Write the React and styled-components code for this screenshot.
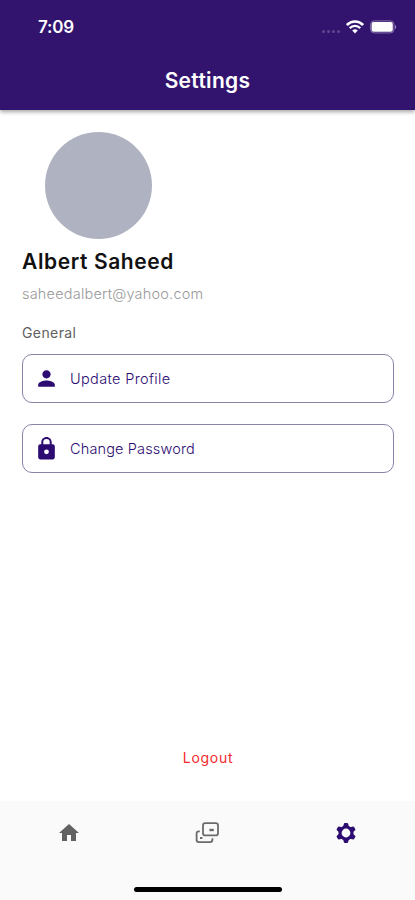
import styled, { createGlobalStyle } from "styled-components";
import { MdPerson, MdHome } from "react-icons/md";

const menuItems = [
  { label: "Update Profile", Icon: MdPerson, spacing: "0.35px" },
  { label: "Change Password", Icon: LockIcon, spacing: "0.15px" },
];

function LockIcon({ size }) {
  return (
    <svg width={size} height={size} viewBox="0 0 24 24" fill="currentColor" fillRule="evenodd">
      <path d="M18 8h-1V6c0-2.76-2.24-5-5-5S7 3.24 7 6v2H6a2 2 0 0 0-2 2v10.5a2 2 0 0 0 2 2h12a2 2 0 0 0 2-2V10a2 2 0 0 0-2-2ZM12 17.5a2.3 2.3 0 1 1 0-4.6 2.3 2.3 0 0 1 0 4.6ZM15.1 8H8.9V6a3.1 3.1 0 0 1 6.2 0Z" />
    </svg>
  );
}

function WifiIcon() {
  return (
    <svg width="18" height="14" viewBox="0 0 18 14" fill="none" stroke="#fff">
      <path d="M0.9 5C5.3 0.4 12.7 0.4 17.1 5" strokeWidth="2.6" />
      <path d="M3.8 8.1C6.7 5.1 11.3 5.1 14.2 8.1" strokeWidth="2.3" />
      <path d="M6.2 10.5Q9 7.9 11.8 10.5L9 13.5Z" fill="#fff" stroke="none" />
    </svg>
  );
}

function BatteryIcon() {
  return (
    <svg width="27" height="14" viewBox="0 0 27 14">
      <rect x="0.6" y="0.9" width="23.4" height="12" rx="3.6" fill="none" stroke="#fff" strokeOpacity="0.4" />
      <rect x="1.6" y="2" width="21.2" height="9.8" rx="2.1" fill="#fff" />
      <path d="M25 5v4c1.6-.6 1.6-3.4 0-4Z" fill="#fff" fillOpacity="0.5" />
    </svg>
  );
}

function CardsIcon() {
  return (
    <svg width="24" height="24" viewBox="0 0 24 24" fill="none" stroke="#6b6b6b" strokeWidth="1.8">
      <rect x="8" y="2.2" width="15" height="12.2" rx="2.2" />
      <path d="M14.4 9h4.4" strokeWidth="2.4" />
      <path d="M4.8 10.3H3.7Q1.6 10.3 1.6 12.4v6.4Q1.6 21.1 3.9 21.1h11.2Q17.4 21.1 17.4 18.8v-1.6" />
      <path d="M5 17h2.4" strokeWidth="2" />
    </svg>
  );
}

function GearIcon() {
  return (
    <svg width="22" height="22" viewBox="-11 -11 22 22" fill="#2d0c72">
      <circle r="6" fill="none" stroke="#2d0c72" strokeWidth="3.2" />
      {[0, 60, 120, 180, 240, 300].map((angle) => (
        <path key={angle} d="M-2.9-6.3-2.1-9.3Q-1.9-10-1.2-10H1.2Q1.9-10 2.1-9.3L2.9-6.3Z" transform={`rotate(${angle})`} />
      ))}
    </svg>
  );
}

function App() {
  return (
    <>
      <GlobalStyle />
      <Screen>
        <Header>
          <StatusBar>
            <Time>7:09</Time>
            <StatusIcons>
              <Signal>
                <Dot />
                <Dot />
                <Dot />
                <Dot />
              </Signal>
              <WifiIcon />
              <BatteryIcon />
            </StatusIcons>
          </StatusBar>
          <Title>Settings</Title>
        </Header>

        <Content>
          <Avatar />
          <Name>Albert Saheed</Name>
          <Email>saheedalbert@yahoo.com</Email>
          <SectionLabel>General</SectionLabel>
          <Menu>
            {menuItems.map(({ label, Icon, spacing }) => (
              <MenuButton key={label} $spacing={spacing}>
                <Icon size={25} />
                <span>{label}</span>
              </MenuButton>
            ))}
          </Menu>
          <LogoutButton>Logout</LogoutButton>
        </Content>

        <BottomBar>
          <Tabs>
            <Tab aria-label="Home">
              <MdHome size={24} />
            </Tab>
            <Tab aria-label="Cards">
              <CardsIcon />
            </Tab>
            <Tab aria-label="Settings">
              <GearIcon />
            </Tab>
          </Tabs>
          <HomeIndicator />
        </BottomBar>
      </Screen>
    </>
  );
}

export default App;

const GlobalStyle = createGlobalStyle`
  * {
    box-sizing: border-box;
  }

  body {
    margin: 0;
    background: #fff;
    font-family: Inter, "Liberation Sans", sans-serif;
  }

  button {
    padding: 0;
    border: none;
    background: none;
    font-family: inherit;
  }

  svg {
    display: block;
    flex-shrink: 0;
  }
`;

const Screen = styled.div`
  display: flex;
  flex-direction: column;
  width: 100%;
  height: 900px;
  overflow: hidden;
`;

const Header = styled.header`
  height: 109.5px;
  flex-shrink: 0;
  background: #32146f;
  box-shadow: 0 2px 4px rgba(0, 0, 0, 0.35);
  color: #fff;
`;

const StatusBar = styled.div`
  display: flex;
  justify-content: space-between;
  align-items: center;
  height: 54px;
  padding: 0 18px 0 38px;
`;

const Time = styled.span`
  font-size: 17px;
  font-weight: 600;
  letter-spacing: -0.2px;
`;

const StatusIcons = styled.div`
  display: flex;
  align-items: center;
  gap: 6px;
`;

const Signal = styled.div`
  display: flex;
  gap: 2px;
  margin-top: 8px;
`;

const Dot = styled.span`
  width: 3px;
  height: 3px;
  border-radius: 50%;
  background: rgba(255, 255, 255, 0.22);
`;

const Title = styled.h1`
  margin: 0;
  font-size: 21px;
  font-weight: 600;
  line-height: 54px;
  letter-spacing: 0.3px;
  text-align: center;
`;

const Content = styled.main`
  display: flex;
  flex-direction: column;
  align-items: flex-start;
  flex: 1;
  padding: 22.5px 21px 31px 22px;
`;

const Avatar = styled.div`
  width: 107px;
  height: 107px;
  margin-left: 23px;
  border-radius: 50%;
  background: #afb3c1;
`;

const Name = styled.h2`
  margin: 9px 0 0;
  color: #111;
  font-size: 21px;
  font-weight: 600;
  line-height: 28px;
  letter-spacing: 0.6px;
`;

const Email = styled.p`
  margin: 8px 0 0;
  color: #999;
  font-size: 14.5px;
  font-weight: 300;
  line-height: 20px;
  letter-spacing: 0.2px;
`;

const SectionLabel = styled.p`
  margin: 19px 0 0;
  color: #606060;
  font-size: 14px;
  line-height: 20px;
  letter-spacing: 0.4px;
`;

const Menu = styled.nav`
  display: flex;
  flex-direction: column;
  gap: 21px;
  width: 100%;
  margin-top: 10.5px;
`;

const MenuButton = styled.button`
  display: flex;
  align-items: center;
  gap: 11.5px;
  height: 49px;
  padding: 0 10.5px;
  border: 1px solid #8983a8;
  border-radius: 10px;
  color: #2d0c72;
  font-size: 14.5px;
  font-weight: 300;
  letter-spacing: ${(props) => props.$spacing};
`;

const LogoutButton = styled.button`
  margin-top: auto;
  align-self: center;
  color: #f42a2f;
  font-size: 14px;
  line-height: 24px;
  letter-spacing: 0.7px;
`;

const BottomBar = styled.footer`
  display: flex;
  flex-direction: column;
  align-items: center;
  justify-content: space-between;
  height: 99px;
  padding-bottom: 8px;
  background: #fafafa;
`;

const Tabs = styled.nav`
  display: flex;
  width: 100%;
  height: 63px;
`;

const Tab = styled.button`
  display: flex;
  flex: 1;
  align-items: center;
  justify-content: center;
  color: #626262;
`;

const HomeIndicator = styled.div`
  width: 148px;
  height: 5px;
  border-radius: 3px;
  background: #000;
`;
